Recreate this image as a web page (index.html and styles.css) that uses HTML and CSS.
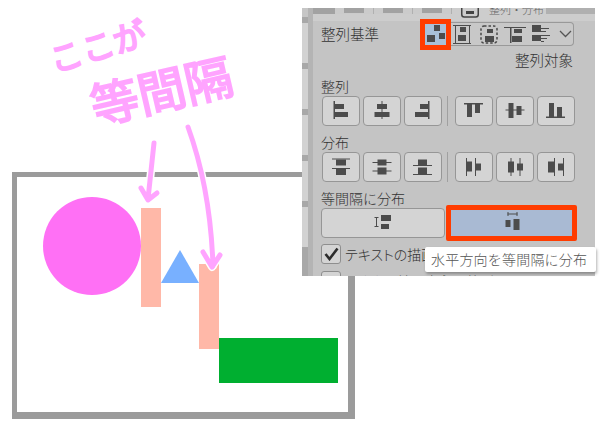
FILE: index.html

```html
<!DOCTYPE html>
<html lang="ja">
<head>
  <meta charset="UTF-8">
  <title>水平方向を等間隔に分布</title>
  <link rel="stylesheet" href="styles.css">
</head>
<body>
  <div class="page">
    <!-- free canvas: the shapes being aligned -->
    <div class="frame"></div>
    <div class="circle"></div>
    <div class="bar bar-a"></div>
    <div class="bar bar-b"></div>
    <svg class="triangle" width="38" height="33" viewBox="0 0 38 33"><polygon points="0,33 38,33 19,0" fill="#78b0ff"/></svg>
    <div class="green"></div>

    <svg class="arrows" width="300" height="300" viewBox="0 0 300 300">
      <g class="halo">
        <path d="M154 143 L148 199 M141 188 L148 200 L157 193"/>
        <path d="M188 127 C200 160 211 205 213 266 M203 252 L212 267 L220 255"/>
      </g>
      <g class="stroke">
        <path d="M154 143 L148 199 M141 188 L148 200 L157 193"/>
        <path d="M188 127 C200 160 211 205 213 266 M203 252 L212 267 L220 255"/>
      </g>
    </svg>
    <span class="note note-small">ここが</span>
    <span class="note note-big">等間隔</span>

    <!-- tool panel -->
    <div class="panel">
      <div class="strip">
        <div class="tile tile-first"></div>
        <div class="tile"></div>
        <div class="tile"></div>
        <div class="tile"></div>
        <div class="tile"></div>
        <div class="tile"></div>
      </div>
      <div class="main">
        <div class="tabbar">
          <div class="tab tab-dark"></div>
          <div class="tab tab-light"><i></i></div>
          <div class="tab tab-light"><i></i></div>
          <div class="tab tab-light"><i></i></div>
          <div class="tab tab-active">
            <svg width="18" height="10" viewBox="0 0 18 10"><rect x="0.75" y="-4" width="16.5" height="13" rx="2.5" fill="none" stroke="#444" stroke-width="1.5"/><rect x="5" y="3" width="8" height="3" fill="#444"/></svg>
            <span>整列・分布</span>
          </div>
        </div>

        <div class="base-row">
          <span class="label">整列基準</span>
          <div class="base-group">
            <div class="base-item selected">
              <svg class="ic" width="20" height="20" viewBox="0 0 20 20"><rect x="8" y="1" width="6" height="6"/><rect x="1" y="11" width="8" height="7"/><rect x="13" y="9" width="6" height="6"/></svg>
            </div>
            <div class="base-item base-second">
              <svg class="ic" width="20" height="20" viewBox="0 0 20 20"><rect x="1" y="1" width="18" height="1"/><rect x="1" y="19" width="18" height="1"/><rect x="3" y="1" width="1" height="18"/><rect x="17" y="1" width="1" height="18"/><rect x="8" y="3" width="6" height="5"/><rect x="6" y="11" width="8" height="6"/></svg>
            </div>
            <div class="base-item">
              <svg class="ic" width="20" height="20" viewBox="0 0 20 20"><rect x="2" y="2" width="16" height="17" rx="3" fill="none" stroke="#484848" stroke-width="1.5" stroke-dasharray="2.5 2"/><rect x="8" y="5" width="6" height="4"/><rect x="6" y="12" width="9" height="6"/></svg>
            </div>
            <div class="base-item">
              <svg class="ic" width="24" height="20" viewBox="0 0 24 20"><rect x="1" y="3" width="22" height="1"/><rect x="7" y="3" width="1.5" height="16"/><rect x="11" y="5" width="8" height="4"/><rect x="9" y="12" width="10" height="6"/></svg>
            </div>
            <div class="base-item">
              <svg class="ic" width="20" height="20" viewBox="0 0 20 20"><rect x="0" y="1" width="9" height="7"/><rect x="9" y="4" width="8" height="1"/><rect x="9" y="7" width="5" height="1"/><rect x="0" y="11" width="9" height="6"/><rect x="9" y="11" width="9" height="1"/><rect x="9" y="14" width="6" height="1"/><rect x="9" y="17" width="3" height="1"/></svg>
            </div>
            <svg class="chevron" width="13" height="8" viewBox="0 0 13 8"><path d="M1 1 L6.5 6.5 L12 1" fill="none" stroke="#555" stroke-width="1.3"/></svg>
          </div>
        </div>
        <div class="target">整列対象</div>

        <div class="label section-label">整列</div>
        <div class="btn-row">
          <button class="btn"><svg class="ic" width="24" height="24" viewBox="0 0 24 24"><rect x="4.5" y="2" width="1.5" height="18"/><rect x="6" y="5" width="9" height="5"/><rect x="6" y="13" width="13" height="5"/></svg></button>
          <button class="btn"><svg class="ic" width="24" height="24" viewBox="0 0 24 24"><rect x="11.5" y="2" width="1" height="18"/><rect x="7" y="5" width="10" height="5"/><rect x="4.5" y="13" width="15" height="5"/></svg></button>
          <button class="btn"><svg class="ic" width="24" height="24" viewBox="0 0 24 24"><rect x="17" y="2" width="1.5" height="18"/><rect x="9" y="5" width="8" height="5"/><rect x="4" y="13" width="13" height="5"/></svg></button>
          <div class="sep"></div>
          <button class="btn"><svg class="ic" width="24" height="24" viewBox="0 0 24 24"><rect x="2" y="4" width="19" height="1.5"/><rect x="5" y="5" width="5" height="13"/><rect x="13" y="5" width="5" height="9"/></svg></button>
          <button class="btn"><svg class="ic" width="24" height="24" viewBox="0 0 24 24"><rect x="2.5" y="10.5" width="19" height="1"/><rect x="5.5" y="4" width="5" height="15"/><rect x="13.5" y="7" width="5" height="9"/></svg></button>
          <button class="btn"><svg class="ic" width="24" height="24" viewBox="0 0 24 24"><rect x="2" y="17.5" width="19" height="1.5"/><rect x="5" y="4" width="5" height="14"/><rect x="13" y="8" width="5" height="10"/></svg></button>
        </div>

        <div class="label section-label">分布</div>
        <div class="btn-row">
          <button class="btn"><svg class="ic" width="24" height="24" viewBox="0 0 24 24"><rect x="3" y="3.5" width="18" height="1"/><rect x="7" y="4.5" width="10" height="6"/><rect x="3" y="13" width="18" height="1"/><rect x="7" y="14" width="10" height="6"/></svg></button>
          <button class="btn"><svg class="ic" width="24" height="24" viewBox="0 0 24 24"><rect x="2.5" y="7" width="19" height="1"/><rect x="7.5" y="4.5" width="9" height="6"/><rect x="2.5" y="15.5" width="19" height="1"/><rect x="7.5" y="12.5" width="9" height="7"/></svg></button>
          <button class="btn"><svg class="ic" width="24" height="24" viewBox="0 0 24 24"><rect x="7" y="4.5" width="9" height="5.5"/><rect x="2" y="10" width="19" height="1"/><rect x="7" y="12.5" width="9" height="6.5"/><rect x="2" y="19" width="19" height="1"/></svg></button>
          <div class="sep"></div>
          <button class="btn"><svg class="ic" width="24" height="24" viewBox="0 0 24 24"><rect x="4" y="3" width="1" height="18"/><rect x="5" y="6.5" width="5" height="10"/><rect x="13" y="3" width="1" height="18"/><rect x="14" y="8.5" width="5" height="7"/></svg></button>
          <button class="btn"><svg class="ic" width="24" height="24" viewBox="0 0 24 24"><rect x="7.5" y="3" width="1" height="18"/><rect x="5" y="6.5" width="6" height="11"/><rect x="16.5" y="3" width="1" height="18"/><rect x="14" y="8.5" width="6" height="7"/></svg></button>
          <button class="btn"><svg class="ic" width="24" height="24" viewBox="0 0 24 24"><rect x="10" y="3" width="1" height="18"/><rect x="4" y="6.5" width="6" height="11"/><rect x="19" y="3" width="1" height="18"/><rect x="14" y="8.5" width="5" height="7"/></svg></button>
        </div>

        <div class="label section-label">等間隔に分布</div>
        <div class="eq-row">
          <button class="btn eq-btn"><svg class="ic" width="24" height="24" viewBox="0 0 24 24"><rect x="3.5" y="6" width="4" height="1"/><rect x="5" y="6" width="1" height="10"/><rect x="3.5" y="15" width="4" height="1"/><rect x="10" y="4" width="10" height="6"/><rect x="10" y="13" width="8" height="5"/></svg></button>
          <button class="btn eq-btn eq-active"><svg class="ic" width="24" height="24" viewBox="0 0 24 24"><rect x="7.5" y="1" width="1" height="4"/><rect x="7.5" y="2.5" width="10" height="1"/><rect x="16.5" y="1" width="1" height="4"/><rect x="5.5" y="9" width="5" height="7"/><rect x="13.5" y="8" width="6" height="11"/></svg></button>
        </div>

        <div class="check-row">
          <span class="checkbox"><svg width="15" height="14" viewBox="0 0 15 14"><path d="M1.5 7 L5.5 12 L13.5 1.5" fill="none" stroke="#2c2c2c" stroke-width="2.6"/></svg></span>
          <span class="check-text">テキストの描画</span>
        </div>
        <div class="check-row">
          <span class="checkbox"></span>
          <span class="check-text">ベクター線の中心で整列</span>
        </div>
      </div>
    </div>

    <div class="tooltip">水平方向を等間隔に分布</div>
  </div>
</body>
</html>
```

FILE: styles.css

```css
* {
  margin: 0;
  padding: 0;
  box-sizing: border-box;
}

body {
  background: #fff;
  font-family: "Noto Sans CJK JP", "Noto Sans", sans-serif;
}

.page {
  position: relative;
  width: 600px;
  height: 424px;
  overflow: hidden;
  background: #fff;
}

/* diagram */
.frame {
  position: absolute;
  left: 12px;
  top: 172px;
  width: 343px;
  height: 247px;
  border: solid #9b9b9b;
  border-width: 5px 7px 7px 5px;
}

.circle {
  position: absolute;
  left: 43px;
  top: 197px;
  width: 98px;
  height: 98px;
  border-radius: 50%;
  background: #ff70f5;
}

.bar {
  position: absolute;
  width: 20px;
  background: #ffb8a8;
}

.bar-a {
  left: 141px;
  top: 208px;
  height: 99px;
}

.bar-b {
  left: 199px;
  top: 264px;
  height: 85px;
}

.triangle {
  position: absolute;
  left: 161px;
  top: 250px;
}

.green {
  position: absolute;
  left: 219px;
  top: 338px;
  width: 119px;
  height: 45px;
  background: #00af30;
}

.arrows {
  position: absolute;
  left: 0;
  top: 0;
}

.arrows path {
  fill: none;
  stroke-linecap: round;
  stroke-linejoin: round;
}

.halo path {
  stroke: #fff;
  stroke-width: 8;
}

.stroke path {
  stroke: #ffa4ff;
  stroke-width: 5;
}

.note {
  position: absolute;
  color: #ffa4ff;
  font-weight: 400;
  white-space: nowrap;
  line-height: 1;
  -webkit-text-stroke: 2px #ffa4ff;
}

.note-small {
  left: 48px;
  top: 29px;
  font-size: 33px;
  transform: rotate(-17deg);
}

.note-big {
  left: 89px;
  top: 64px;
  font-size: 48px;
  transform: rotate(-13deg);
}

/* panel */
.panel {
  position: absolute;
  left: 302px;
  top: 8px;
  width: 293px;
  height: 268px;
  overflow: hidden;
  display: flex;
  background: #aeaeae;
  color: #333;
  font-weight: 300;
}

.strip {
  width: 11px;
  flex: none;
  display: flex;
  flex-direction: column;
  gap: 6px;
  border-right: 5px solid #b4b4b4;
  background: #a8a8a8;
}

.tile {
  height: 40px;
  flex: none;
  background: #d2d2d2;
}

.tile-first {
  height: 9px;
  background: #c6c6c6;
}

.main {
  flex: 1;
  padding-left: 8px;
  background: #c4c4c4;
}

.tabbar {
  display: flex;
  height: 13px;
  margin-left: -8px;
  padding-bottom: 7px;
  background: #b0b0b0;
  box-shadow: inset 0 -7px 0 #cdcdcd;
  overflow: hidden;
}

.tab {
  height: 6px;
}

.tab-dark {
  width: 22px;
  background: #a2a2a2;
}

.tab-light {
  width: 38px;
  margin-right: 1px;
  background: #cbcbcb;
}

.tab-light i {
  display: block;
  width: 20px;
  height: 5px;
  margin-left: 9px;
  background: #a2a2a2;
}

.tab-active {
  display: flex;
  width: 94px;
  padding-left: 9px;
  background: #cdcdcd;
}

.tab-active svg {
  flex: none;
}

.tab-active span {
  margin: -9px 0 0 10px;
  font-size: 11px;
  line-height: 20px;
  white-space: nowrap;
  color: #666;
}

.label {
  font-size: 14px;
  line-height: 20px;
  display: block;
}

.base-row {
  display: flex;
  align-items: center;
  height: 24px;
  margin-top: 1px;
}

.base-row .label {
  font-size: 14.5px;
  width: 100px;
}

.base-group {
  display: flex;
  align-items: center;
  width: 153px;
  height: 24px;
  border: 1px solid #999;
  border-left: 0;
  border-radius: 4px;
  background: #c8c8c8;
}

.base-item {
  display: flex;
  align-items: center;
  justify-content: center;
  flex: none;
  width: 26.5px;
  height: 22px;
}

.base-second {
  margin-left: -3px;
}

.base-item.selected {
  width: 31px;
  height: 31px;
  margin: 0 1px 0 -1px;
  border: 5px solid #ff3c00;
  background: #a9c1d9;
}

.chevron {
  flex: none;
  margin-left: 4px;
}

.target {
  width: 252px;
  margin-top: 4px;
  text-align: right;
  font-size: 14.5px;
  line-height: 20px;
}

.section-label {
  margin-top: 6px;
}

.btn-row {
  display: flex;
  gap: 3px;
  margin-left: 1px;
  height: 30px;
}

.btn {
  display: flex;
  align-items: center;
  justify-content: center;
  width: 38px;
  height: 30px;
  border: 1px solid #969696;
  border-radius: 4px;
  background: #d4d4d4;
}

.sep {
  width: 1px;
  margin: 0 4px 0 2px;
  background: #a0a0a0;
}

.ic {
  fill: #4c4c4c;
}

.eq-row {
  display: flex;
  align-items: center;
  height: 30px;
}

.eq-btn {
  width: 124px;
}

.eq-active {
  flex: none;
  width: 131px;
  height: 36px;
  margin-left: 1px;
  border: 5px solid #ff3c00;
  border-radius: 2px;
  background: #a9bad3;
}

.check-row {
  display: flex;
  align-items: center;
  height: 20px;
  margin-top: 6px;
}

.check-row + .check-row {
  margin-top: 7px;
}

.checkbox {
  display: flex;
  align-items: center;
  justify-content: center;
  width: 20px;
  height: 20px;
  border: 1px solid #8e8e8e;
  border-radius: 3px;
  background: #d4d4d4;
}

.check-text {
  margin-left: 4px;
  font-size: 14px;
  white-space: nowrap;
  font-feature-settings: "palt";
}

.tooltip {
  position: absolute;
  left: 425px;
  top: 247px;
  width: 171px;
  height: 25px;
  padding-left: 6px;
  background: #fff;
  border-radius: 2px;
  box-shadow: 1px 2px 3px rgba(0, 0, 0, 0.3);
  color: #555;
  font-size: 14px;
  letter-spacing: 0.2px;
  font-weight: 300;
  line-height: 25px;
  white-space: nowrap;
}
```
